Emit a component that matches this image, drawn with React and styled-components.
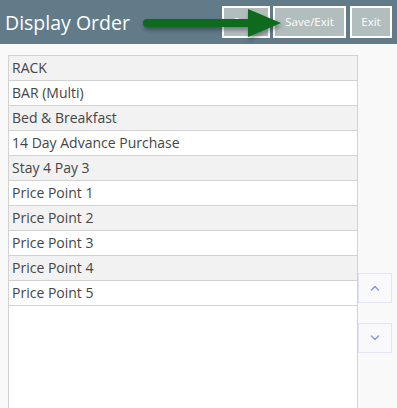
import styled, { createGlobalStyle } from "styled-components";

const GlobalStyle = createGlobalStyle`
  html, body {
    margin: 0;
    padding: 0;
    background: #f9f9f9;
    font-family: "Open Sans", "Liberation Sans", sans-serif;
  }
`;

const Page = styled.div`
  width: 397px;
  height: 408px;
  overflow: hidden;
  position: relative;
`;

// Header
const Header = styled.div`
  height: 44px;
  background-color: #617b89;
  display: flex;
  align-items: center;
  justify-content: space-between;
  padding: 0 5px 0 5px;
  box-sizing: border-box;
`;

const Title = styled.h1`
  margin: 0;
  font-size: 19.5px;
  font-weight: 400;
  color: #ffffff;
`;

const Actions = styled.div`
  display: flex;
  gap: 3px;
  margin-top: -1px;
`;

const HeadButton = styled.button`
  height: 32px;
  width: ${(props) => props.w}px;
  box-sizing: border-box;
  background-color: #b2bdbe;
  border: 2px solid #ffffff;
  color: #ffffff;
  font-family: "Open Sans", "Liberation Sans", sans-serif;
  font-size: 11.5px;
  padding: 0;
  margin-left: ${(props) => props.gap || 0}px;
`;

// Arrow annotation over the header
const Arrow = styled.svg`
  position: absolute;
  left: 138px;
  top: 4px;
  filter: drop-shadow(1px 3px 2px rgba(0, 0, 0, 0.35));
`;

// Content
const Content = styled.div`
  display: grid;
  grid-template-columns: 350px 35px;
  padding: 11px 0 0 8px;
`;

const List = styled.div`
  border: 1px solid #d2d2d2;
  border-bottom: none;
  background: #ffffff;
  height: 360px;
  box-sizing: border-box;
`;

const Row = styled.div`
  height: 24px;
  border-bottom: 1px solid #d2d2d2;
  background-color: ${(props) => (props.odd ? "#ffffff" : "#f2f2f2")};
  color: #454545;
  font-size: 14px;
  line-height: 24px;
  padding-left: 3px;
`;

const Side = styled.div`
  display: flex;
  flex-direction: column;
  gap: 20px;
  padding-top: 218px;
`;

const MoveButton = styled.button`
  width: 34px;
  height: 30px;
  box-sizing: border-box;
  background: #f9f9fc;
  border: 1px solid #e3e4f4;
  display: flex;
  align-items: center;
  justify-content: center;
  padding: 0;
`;

const rows = [
  "RACK",
  "BAR (Multi)",
  "Bed & Breakfast",
  "14 Day Advance Purchase",
  "Stay 4 Pay 3",
  "Price Point 1",
  "Price Point 2",
  "Price Point 3",
  "Price Point 4",
  "Price Point 5",
];

const Chevron = ({ up }) => (
  <svg width="10" height="6" viewBox="0 0 10 6">
    <path
      d={up ? "M1.5 5 L5 1.5 L8.5 5" : "M1.5 1 L5 4.5 L8.5 1"}
      fill="none"
      stroke="#8f9be0"
      strokeWidth="1.6"
      strokeLinecap="round"
      strokeLinejoin="round"
    />
  </svg>
);

const App = () => {
  return (
    <Page>
      <GlobalStyle />
      <Header>
        <Title>Display Order</Title>
        <Actions>
          <HeadButton w={48}>Save</HeadButton>
          <HeadButton w={73}>Save/Exit</HeadButton>
          <HeadButton w={42} gap={1}>Exit</HeadButton>
        </Actions>
      </Header>
      <Arrow width="150" height="40" viewBox="0 0 150 40">
        <line
          x1="9"
          y1="19"
          x2="115"
          y2="19"
          stroke="#0e6a1d"
          strokeWidth="8"
          strokeLinecap="round"
        />
        <polygon points="110,5 143,19 110,33" fill="#0e6a1d" />
      </Arrow>
      <Content>
        <List>
          {rows.map((r, i) => (
            <Row key={r} odd={i % 2 === 1}>
              {r}
            </Row>
          ))}
        </List>
        <Side>
          <MoveButton>
            <Chevron up />
          </MoveButton>
          <MoveButton>
            <Chevron />
          </MoveButton>
        </Side>
      </Content>
    </Page>
  );
};

export default App;
